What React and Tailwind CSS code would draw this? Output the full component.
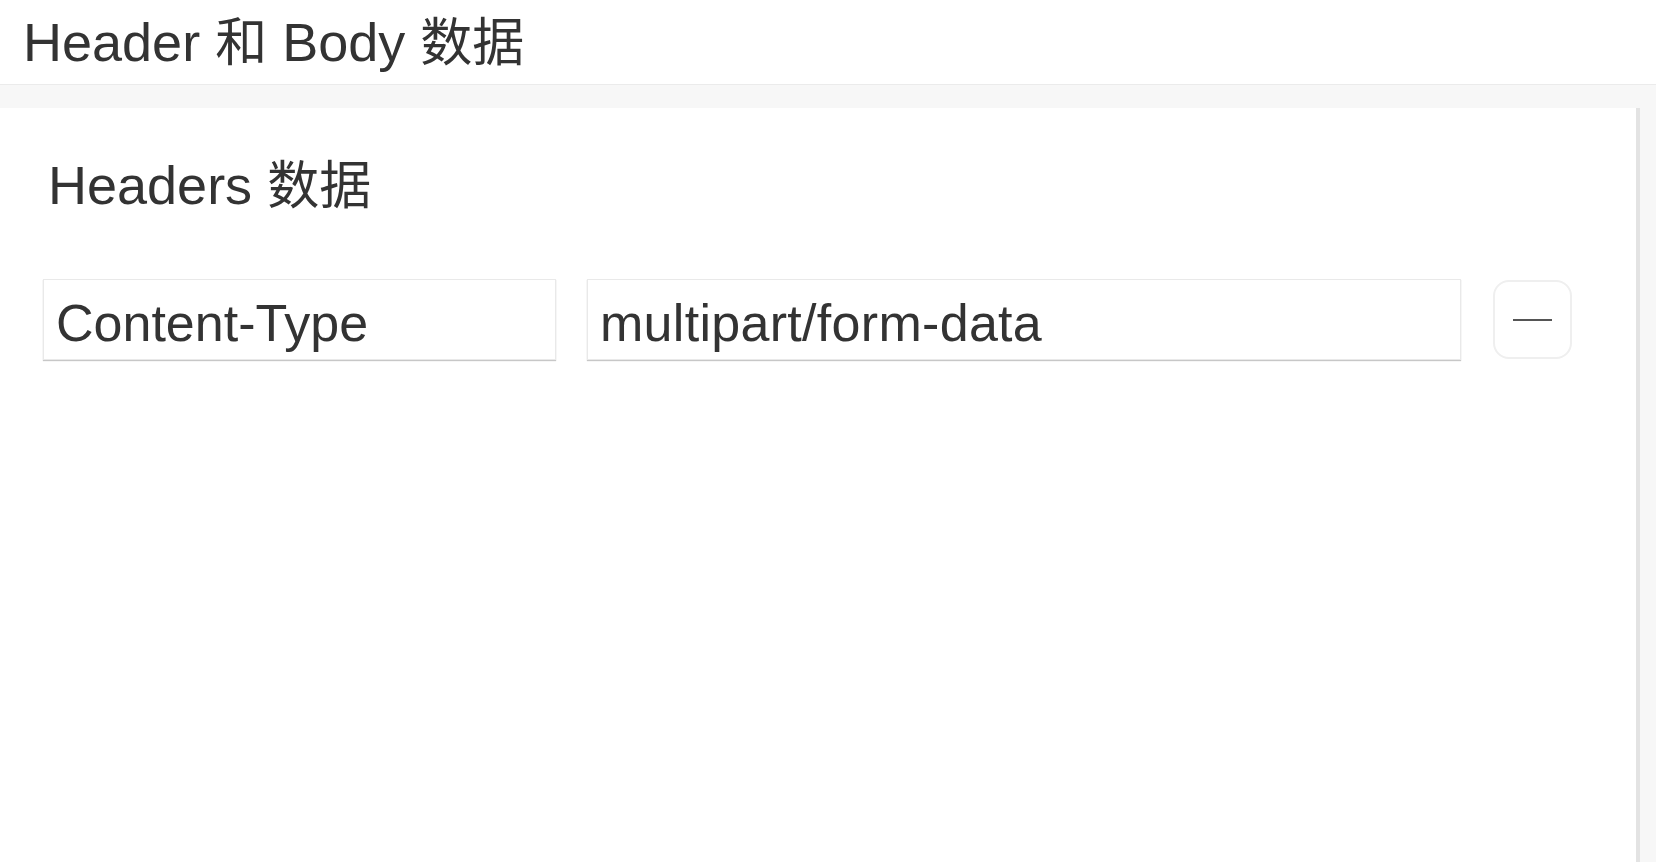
import React from "react";

const font = { fontFamily: '"Liberation Sans", "Noto Sans CJK SC", sans-serif' };

export default function App() {
  return (
    <div
      className="w-[1656px] h-[862px] flex flex-col overflow-hidden bg-white text-[#333]"
      style={font}
    >
      <div className="h-[84px] shrink-0 pl-[23px] pt-[16px]">
        <h1 className="h-[52px] text-[54px] leading-[52px] font-normal">
          Header <span className="text-[52px]">和</span> Body <span className="text-[52px]">数据</span>
        </h1>
      </div>
      <div className="h-[24px] shrink-0 bg-[#f7f7f7] border-t border-[#ebebeb]" />
      <div className="flex-1 flex min-h-0">
        <div className="flex-1 bg-white pl-[43px] pr-[64px]">
          <h2 className="mt-[51px] h-[52px] pl-[5px] text-[54px] leading-[52px] font-normal">
            Headers <span className="text-[52px]">数据</span>
          </h2>
          <div className="mt-[68px] flex items-center gap-[31px]">
            <input
              readOnly
              value="Content-Type"
              className="w-[513px] h-[81px] pl-3 pt-[6px] border border-[#e9e9e9] shadow-[0_1px_1px_rgba(0,0,0,0.22)] text-[52px] text-[#333] outline-none bg-white"
              style={font}
            />
            <input
              readOnly
              value="multipart/form-data"
              className="flex-1 min-w-0 h-[81px] pl-3 pt-[6px] border border-[#e9e9e9] shadow-[0_1px_1px_rgba(0,0,0,0.22)] text-[52px] text-[#333] outline-none bg-white tracking-[0.3px]"
              style={font}
            />
            <button className="ml-px w-[79px] h-[79px] shrink-0 rounded-[16px] border-2 border-[#efefef] bg-white flex items-center justify-center">
              <span className="block w-[39px] h-[2px] bg-[#555]" />
            </button>
          </div>
        </div>
        <div className="w-[20px] shrink-0 bg-[#f7f7f7] border-l-4 border-[#e3e3e3]" />
      </div>
    </div>
  );
}
